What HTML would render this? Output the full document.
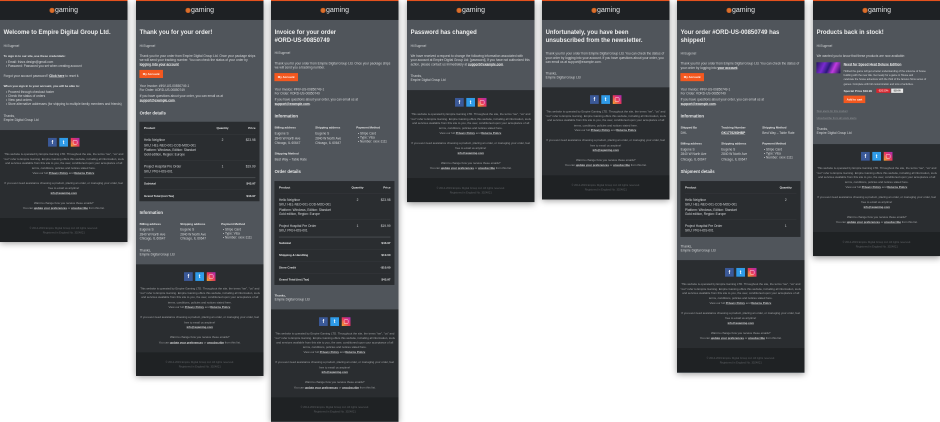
<!DOCTYPE html>
<html><head><meta charset="utf-8"><style>
html,body{margin:0;padding:0;background:#fff;width:940px;height:422px;overflow:hidden;font-family:"Liberation Sans",sans-serif}
.m{position:absolute;top:0;width:600px;height:calc(var(--h)*4.706px);left:calc(var(--l)*1px);transform:scale(.2125);transform-origin:0 0;background:#50555b;box-shadow:0 8px 30px rgba(0,0,0,.4);overflow:hidden;filter:blur(1px)}
.bar{position:absolute;left:0;top:0;width:600px;height:94px;background:#1e2124;border-top:5px solid #e4521e;box-sizing:border-box}
.logo{position:absolute;left:0;width:600px;top:24px;text-align:center;color:#e4e5e6;font-size:33px;line-height:44px}
.logo i{display:inline-block;width:24px;height:24px;border-radius:50%;background:#d9702c;vertical-align:-4px;margin-right:2px;box-shadow:inset 0 0 0 3px #c85a20}
.l{position:absolute;left:calc(var(--x,3.6)*4.706px);top:calc(var(--y)*4.706px);transform:translateY(-50%);white-space:nowrap;font-size:15px;color:#d3d5d7;line-height:1}
.h1{font-size:28px;font-weight:bold;color:#eceded}
.h2{font-size:20px;font-weight:bold;color:#e6e7e8}
.b{font-weight:bold;color:#e4e5e6;font-size:14px}
u{font-weight:bold;color:#eceded}
.r{transform:translate(-100%,-50%)}
.c{transform:translate(-50%,-50%)}
.btn{position:absolute;left:calc(var(--x,3.4)*4.706px);top:calc(var(--y)*4.706px);width:calc(var(--w,23.5)*4.706px);height:38px;background:#f4581f;color:#fff;font-size:14px;font-weight:bold;line-height:38px;text-align:center}
.t{position:absolute;left:16px;width:565px;top:calc(var(--y)*4.706px);height:calc(var(--s)*4.706px);background:#2a2d30}
.d{position:absolute;left:37px;width:525px;top:calc(var(--y)*4.706px);height:2px;background:#393c3f}
.d.k{height:3px;background:#5a5d60}
.f{position:absolute;left:0;width:600px;height:527px;top:calc(var(--f)*4.706px);background:#2a2d30;color:#a2a4a6;font-size:13.4px;line-height:1}
.f .ln{position:absolute;left:0;width:600px;text-align:center;top:calc(var(--y)*4.706px);transform:translateY(-50%);white-space:nowrap}
.f u{color:#d0d1d2}
.f .bot{position:absolute;left:0;top:414px;width:600px;height:113px;background:#1f2224}
.f .low{color:#5e6164;font-size:12.5px}
.s{position:absolute;top:37px;width:41px;height:41px;color:#fff;font-weight:bold;font-size:24px;line-height:41px;text-align:center}
.fb{left:226px;background:#3b5998}.tw{left:279px;background:#2f9be8}.ig{left:333px;background:linear-gradient(45deg,#f7b02b,#e8355d 50%,#a62bb8)}
.ig:after{content:"";position:absolute;left:10px;top:10px;width:17px;height:17px;border:2px solid #fff;border-radius:5px}
.img{position:absolute;left:16px;top:293px;width:113px;height:52px;background:linear-gradient(115deg,#23155e,#7a2bd0 30%,#2a1a7a 50%,#c23be0 70%,#1a1050)}
.bd{position:absolute;top:calc(var(--y)*4.706px);height:20px;line-height:20px;font-size:11px;text-align:center;transform:translateY(-50%)}
</style></head><body>

<!-- 1 -->
<div class="m" style="--l:0;--h:242">
<div class="bar"></div><div class="logo"><i></i>gaming</div>
<div class="l h1" style="--y:32">Welcome to Empire Digital Group Ltd.</div>
<div class="l" style="--y:46">Hi Eugene!</div>
<div class="l b" style="--y:56">To sign in to our site, use these credentials:</div>
<div class="l" style="--y:62;--x:6">• Email: frizzz.design@gmail.com</div>
<div class="l" style="--y:66;--x:6">• Password: Password you set when creating account</div>
<div class="l" style="--y:76">Forgot your account password? <u>Click here</u> to reset it.</div>
<div class="l b" style="--y:86">When you sign in to your account, you will be able to:</div>
<div class="l" style="--y:92;--x:6">• Proceed through checkout faster</div>
<div class="l" style="--y:96;--x:6">• Check the status of orders</div>
<div class="l" style="--y:100;--x:6">• View past orders</div>
<div class="l" style="--y:104;--x:6">• Store alternative addresses (for shipping to multiple family members and friends)</div>
<div class="l" style="--y:116">Thanks,</div>
<div class="l" style="--y:120">Empire Digital Group Ltd</div>
<div class="f" style="--f:130"><div class="s fb">f</div><div class="s tw">t</div><div class="s ig"></div>
<div class="ln" style="--y:24">This website is operated by Empire Gaming LTD. Throughout the site, the terms "we", "us" and</div>
<div class="ln" style="--y:29">"our" refer to Empire Gaming. Empire Gaming offers this website, including all information, tools</div>
<div class="ln" style="--y:33">and services available from this site to you, the user, conditioned upon your acceptance of all</div>
<div class="ln" style="--y:38">terms, conditions, policies and notices stated here.</div>
<div class="ln" style="--y:43">View our full <u>Privacy Policy</u> and <u>Returns Policy</u>.</div>
<div class="ln" style="--y:53">If you ever need assistance choosing a product, placing an order, or managing your order, feel</div>
<div class="ln" style="--y:58">free to email us anytime!</div>
<div class="ln" style="--y:63"><u>info@egaming.com</u></div>
<div class="ln" style="--y:73">Want to change how you receive these emails?</div>
<div class="ln" style="--y:78">You can <u>update your preferences</u> or <u>unsubscribe</u> from this list.</div>
<div class="bot"></div>
<div class="ln low" style="--y:98">© 2014-2019 Empire Digital Group Ltd. All rights reserved.</div>
<div class="ln low" style="--y:102.5">Registered in England No. 3024821</div>
</div></div>

<!-- 2 -->
<div class="m" style="--l:135.7;--h:376">
<div class="bar"></div><div class="logo"><i></i>gaming</div>
<div class="l h1" style="--y:32">Thank you for your order!</div>
<div class="l" style="--y:46">Hi Eugene!</div>
<div class="l" style="--y:56">Thank you for your order from Empire Digital Group Ltd. Once your package ships</div>
<div class="l" style="--y:60">we will send your tracking number. You can check the status of your order by</div>
<div class="l" style="--y:64.5"><u>logging into your account</u></div>
<div class="btn" style="--y:70">My Account</div>
<div class="l" style="--y:86">Your Invoice: #INV-US-00850749-1</div>
<div class="l" style="--y:90">For Order: #ORD-US-00850749</div>
<div class="l" style="--y:96">If you have questions about your order, you can email us at</div>
<div class="l" style="--y:100.5"><u>support@example.com</u>.</div>
<div class="l h2" style="--y:113">Order details</div>
<div class="t" style="--y:121.7;--s:79.5"></div>
<div class="l b" style="--y:127.7;--x:8">Product</div>
<div class="l b c" style="--y:127.7;--x:86.5">Quantity</div>
<div class="l b r" style="--y:127.7;--x:119.5">Price</div>
<div class="d" style="--y:134.3"></div>
<div class="l" style="--y:140;--x:8">Hello Neighbor</div>
<div class="l c" style="--y:140;--x:86.5">2</div>
<div class="l r" style="--y:140;--x:119.5">$23.98</div>
<div class="l" style="--y:145.3;--x:8">SKU: HEL-NEO-001-COD-MOD-001</div>
<div class="l" style="--y:150;--x:8">Platform: Windows, Edition: Standart</div>
<div class="l" style="--y:154.6;--x:8">Gold edition, Region: Europe</div>
<div class="d" style="--y:160.3"></div>
<div class="l" style="--y:166.5;--x:8">Project Hospital Pre Order</div>
<div class="l c" style="--y:166.5;--x:86.5">1</div>
<div class="l r" style="--y:166.5;--x:119.5">$19.99</div>
<div class="l" style="--y:171.5;--x:8">SKU: PRJ-HOS-001</div>
<div class="d k" style="--y:177.5"></div>
<div class="l b" style="--y:183.5;--x:8">Subtotal</div>
<div class="l b r" style="--y:183.5;--x:119.5">$43.97</div>
<div class="d" style="--y:189.5"></div>
<div class="l b" style="--y:195.7;--x:8">Grand Total (incl.Tax)</div>
<div class="l b r" style="--y:195.7;--x:119.5">$43.97</div>
<div class="l h2" style="--y:212.7">Information</div>
<div class="l b" style="--y:223.7">Billing address</div><div class="l b" style="--y:223.7;--x:44.3">Shipping address</div><div class="l b" style="--y:223.7;--x:85.3">Payment Method</div>
<div class="l" style="--y:229.7">Eugene S</div><div class="l" style="--y:229.7;--x:44.3">Eugene S</div><div class="l" style="--y:229.7;--x:87">• Stripe Card</div>
<div class="l" style="--y:234.3">2840 W North Ave</div><div class="l" style="--y:234.3;--x:44.3">2840 W North Ave</div><div class="l" style="--y:233.5;--x:87">• Type: Visa</div>
<div class="l" style="--y:238.7">Chicago, IL 60647</div><div class="l" style="--y:238.7;--x:44.3">Chicago, IL 60647</div><div class="l" style="--y:237.7;--x:87">• Number: xxxx-1111</div>
<div class="l" style="--y:250.5">Thanks,</div>
<div class="l" style="--y:254.5">Empire Digital Group Ltd</div>
<div class="f" style="--f:264.3"><div class="s fb">f</div><div class="s tw">t</div><div class="s ig"></div>
<div class="ln" style="--y:24">This website is operated by Empire Gaming LTD. Throughout the site, the terms "we", "us" and</div>
<div class="ln" style="--y:29">"our" refer to Empire Gaming. Empire Gaming offers this website, including all information, tools</div>
<div class="ln" style="--y:33">and services available from this site to you, the user, conditioned upon your acceptance of all</div>
<div class="ln" style="--y:38">terms, conditions, policies and notices stated here.</div>
<div class="ln" style="--y:43">View our full <u>Privacy Policy</u> and <u>Returns Policy</u>.</div>
<div class="ln" style="--y:53">If you ever need assistance choosing a product, placing an order, or managing your order, feel</div>
<div class="ln" style="--y:58">free to email us anytime!</div>
<div class="ln" style="--y:63"><u>info@egaming.com</u></div>
<div class="ln" style="--y:73">Want to change how you receive these emails?</div>
<div class="ln" style="--y:78">You can <u>update your preferences</u> or <u>unsubscribe</u> from this list.</div>
<div class="bot"></div>
<div class="ln low" style="--y:98">© 2014-2019 Empire Digital Group Ltd. All rights reserved.</div>
<div class="ln low" style="--y:102.5">Registered in England No. 3024821</div>
</div></div>

<!-- 3 -->
<div class="m" style="--l:271;--h:422">
<div class="bar"></div><div class="logo"><i></i>gaming</div>
<div class="l h1" style="--y:32">Invoice for your order</div>
<div class="l h1" style="--y:40">#ORD-US-00850749</div>
<div class="l" style="--y:53">Hi Eugene!</div>
<div class="l" style="--y:63.7">Thank you for your order from Empire Digital Group Ltd. Once your package ships</div>
<div class="l" style="--y:67.7">we will send you a tracking number.</div>
<div class="btn" style="--y:73">My Account</div>
<div class="l" style="--y:89.7">Your Invoice: #INV-US-00850749-1</div>
<div class="l" style="--y:93.7">For Order: #ORD-US-00850749</div>
<div class="l" style="--y:99.7">If you have questions about your order, you can email us at</div>
<div class="l" style="--y:104"><u>support@example.com</u>.</div>
<div class="l h2" style="--y:116.5">Information</div>
<div class="l b" style="--y:127.5">Billing address</div><div class="l b" style="--y:127.5;--x:44.3">Shipping address</div><div class="l b" style="--y:127.5;--x:85.3">Payment Method</div>
<div class="l" style="--y:133.5">Eugene S</div><div class="l" style="--y:133.5;--x:44.3">Eugene S</div><div class="l" style="--y:133.5;--x:87">• Stripe Card</div>
<div class="l" style="--y:138.5">2840 W North Ave</div><div class="l" style="--y:138.5;--x:44.3">2840 W North Ave</div><div class="l" style="--y:137.5;--x:87">• Type: Visa</div>
<div class="l" style="--y:143.3">Chicago, IL 60647</div><div class="l" style="--y:143.3;--x:44.3">Chicago, IL 60647</div><div class="l" style="--y:141.5;--x:87">• Number: xxxx-1111</div>
<div class="l b" style="--y:153.3">Shipping Method</div>
<div class="l" style="--y:159.3">Best Way – Table Rate</div>
<div class="l h2" style="--y:172">Order details</div>
<div class="t" style="--y:181;--s:104"></div>
<div class="l b" style="--y:187.3;--x:8">Product</div>
<div class="l b c" style="--y:187.3;--x:86.5">Quantity</div>
<div class="l b r" style="--y:187.3;--x:119.5">Price</div>
<div class="d" style="--y:193.5"></div>
<div class="l" style="--y:200;--x:8">Hello Neighbor</div>
<div class="l c" style="--y:200;--x:86.5">2</div>
<div class="l r" style="--y:200;--x:119.5">$23.98</div>
<div class="l" style="--y:204.7;--x:8">SKU: HEL-NEO-001-COD-MOD-001</div>
<div class="l" style="--y:210;--x:8">Platform: Windows, Edition: Standart</div>
<div class="l" style="--y:214;--x:8">Gold edition, Region: Europe</div>
<div class="d" style="--y:219.5"></div>
<div class="l" style="--y:226;--x:8">Project Hospital Pre Order</div>
<div class="l c" style="--y:226;--x:86.5">1</div>
<div class="l r" style="--y:226;--x:119.5">$19.99</div>
<div class="l" style="--y:230.7;--x:8">SKU: PRJ-HOS-001</div>
<div class="d k" style="--y:236.7"></div>
<div class="l b" style="--y:243;--x:8">Subtotal</div>
<div class="l b r" style="--y:243;--x:119.5">$43.97</div>
<div class="d" style="--y:249"></div>
<div class="l b" style="--y:255;--x:8">Shipping &amp; Handling</div>
<div class="l b r" style="--y:255;--x:119.5">$10.00</div>
<div class="d" style="--y:261"></div>
<div class="l b" style="--y:267.3;--x:8">Store Credit</div>
<div class="l b r" style="--y:267.3;--x:119.5">-$10.00</div>
<div class="d" style="--y:273.5"></div>
<div class="l b" style="--y:279.7;--x:8">Grand Total (incl.Tax)</div>
<div class="l b r" style="--y:279.7;--x:119.5">$43.97</div>
<div class="l b" style="--y:295.3">Thanks,</div>
<div class="l" style="--y:299.3">Empire Digital Group Ltd</div>
<div class="f" style="--f:309.3"><div class="s fb">f</div><div class="s tw">t</div><div class="s ig"></div>
<div class="ln" style="--y:24">This website is operated by Empire Gaming LTD. Throughout the site, the terms "we", "us" and</div>
<div class="ln" style="--y:29">"our" refer to Empire Gaming. Empire Gaming offers this website, including all information, tools</div>
<div class="ln" style="--y:33">and services available from this site to you, the user, conditioned upon your acceptance of all</div>
<div class="ln" style="--y:38">terms, conditions, policies and notices stated here.</div>
<div class="ln" style="--y:43">View our full <u>Privacy Policy</u> and <u>Returns Policy</u>.</div>
<div class="ln" style="--y:53">If you ever need assistance choosing a product, placing an order, or managing your order, feel</div>
<div class="ln" style="--y:58">free to email us anytime!</div>
<div class="ln" style="--y:63"><u>info@egaming.com</u></div>
<div class="ln" style="--y:73">Want to change how you receive these emails?</div>
<div class="ln" style="--y:78">You can <u>update your preferences</u> or <u>unsubscribe</u> from this list.</div>
<div class="bot"></div>
<div class="ln low" style="--y:98">© 2014-2019 Empire Digital Group Ltd. All rights reserved.</div>
<div class="ln low" style="--y:102.5">Registered in England No. 3024821</div>
</div></div>

<!-- 4 -->
<div class="m" style="--l:406.5;--h:202">
<div class="bar"></div><div class="logo"><i></i>gaming</div>
<div class="l h1" style="--y:32">Password has changed</div>
<div class="l" style="--y:46">Hi Eugene!</div>
<div class="l" style="--y:56">We have received a request to change the following information associated with</div>
<div class="l" style="--y:60">your account at Empire Digital Group Ltd: [password]. If you have not authorized this</div>
<div class="l" style="--y:64.5">action, please contact us immediately at <u>support@example.com</u>.</div>
<div class="l" style="--y:76">Thanks,</div>
<div class="l" style="--y:80">Empire Digital Group Ltd</div>
<div class="f" style="--f:90"><div class="s fb">f</div><div class="s tw">t</div><div class="s ig"></div>
<div class="ln" style="--y:24">This website is operated by Empire Gaming LTD. Throughout the site, the terms "we", "us" and</div>
<div class="ln" style="--y:29">"our" refer to Empire Gaming. Empire Gaming offers this website, including all information, tools</div>
<div class="ln" style="--y:33">and services available from this site to you, the user, conditioned upon your acceptance of all</div>
<div class="ln" style="--y:38">terms, conditions, policies and notices stated here.</div>
<div class="ln" style="--y:43">View our full <u>Privacy Policy</u> and <u>Returns Policy</u>.</div>
<div class="ln" style="--y:53">If you ever need assistance choosing a product, placing an order, or managing your order, feel</div>
<div class="ln" style="--y:58">free to email us anytime!</div>
<div class="ln" style="--y:63"><u>info@egaming.com</u></div>
<div class="ln" style="--y:73">Want to change how you receive these emails?</div>
<div class="ln" style="--y:78">You can <u>update your preferences</u> or <u>unsubscribe</u> from this list.</div>
<div class="bot"></div>
<div class="ln low" style="--y:98">© 2014-2019 Empire Digital Group Ltd. All rights reserved.</div>
<div class="ln low" style="--y:102.5">Registered in England No. 3024821</div>
</div></div>

<!-- 5 -->
<div class="m" style="--l:541.7;--h:199.5">
<div class="bar"></div><div class="logo"><i></i>gaming</div>
<div class="l h1" style="--y:32">Unfortunately, you have been</div>
<div class="l h1" style="--y:40">unsubscribed from the newsletter.</div>
<div class="l" style="--y:53.7">Thank you for your order from Empire Digital Group Ltd. You can check the status of</div>
<div class="l" style="--y:57.7">your order by logging into your account. If you have questions about your order, you</div>
<div class="l" style="--y:62">can email us at support@example.com.</div>
<div class="l" style="--y:73.7">Thanks,</div>
<div class="l" style="--y:77.7">Empire Digital Group Ltd</div>
<div class="f" style="--f:87.3"><div class="s fb">f</div><div class="s tw">t</div><div class="s ig"></div>
<div class="ln" style="--y:24">This website is operated by Empire Gaming LTD. Throughout the site, the terms "we", "us" and</div>
<div class="ln" style="--y:29">"our" refer to Empire Gaming. Empire Gaming offers this website, including all information, tools</div>
<div class="ln" style="--y:33">and services available from this site to you, the user, conditioned upon your acceptance of all</div>
<div class="ln" style="--y:38">terms, conditions, policies and notices stated here.</div>
<div class="ln" style="--y:43">View our full <u>Privacy Policy</u> and <u>Returns Policy</u>.</div>
<div class="ln" style="--y:53">If you ever need assistance choosing a product, placing an order, or managing your order, feel</div>
<div class="ln" style="--y:58">free to email us anytime!</div>
<div class="ln" style="--y:63"><u>info@egaming.com</u></div>
<div class="ln" style="--y:73">Want to change how you receive these emails?</div>
<div class="ln" style="--y:78">You can <u>update your preferences</u> or <u>unsubscribe</u> from this list.</div>
<div class="bot"></div>
<div class="ln low" style="--y:98">© 2014-2019 Empire Digital Group Ltd. All rights reserved.</div>
<div class="ln low" style="--y:102.5">Registered in England No. 3024821</div>
</div></div>

<!-- 6 -->
<div class="m" style="--l:677;--h:373">
<div class="bar"></div><div class="logo"><i></i>gaming</div>
<div class="l h1" style="--y:32">Your order #ORD-US-00850749 has</div>
<div class="l h1" style="--y:40">shipped!</div>
<div class="l" style="--y:53.7">Hi Eugene!</div>
<div class="l" style="--y:63.7">Thank you for your order from Empire Digital Group Ltd. You can check the status of</div>
<div class="l" style="--y:68">your order by logging into <u>your account</u>.</div>
<div class="btn" style="--y:73">My Account</div>
<div class="l" style="--y:89.7">Your Invoice: #INV-US-00850749-1</div>
<div class="l" style="--y:93.7">For Order: #ORD-US-00850749</div>
<div class="l" style="--y:99.7">If you have questions about your order, you can email us at</div>
<div class="l" style="--y:104"><u>support@example.com</u>.</div>
<div class="l h2" style="--y:116.5">Information</div>
<div class="l b" style="--y:127.5">Shipped By</div><div class="l b" style="--y:127.5;--x:44.3">Tracking Number</div><div class="l b" style="--y:127.5;--x:85.3">Shipping Method</div>
<div class="l" style="--y:133.3">DHL</div><div class="l" style="--y:133.3;--x:44.3"><u>GK1776260HBP</u></div><div class="l" style="--y:133.3;--x:85.3">Best Way – Table Rate</div>
<div class="l b" style="--y:143.7">Billing address</div><div class="l b" style="--y:143.7;--x:44.3">Shipping address</div><div class="l b" style="--y:143.7;--x:85.3">Payment Method</div>
<div class="l" style="--y:149.7">Eugene S</div><div class="l" style="--y:149.7;--x:44.3">Eugene S</div><div class="l" style="--y:149.7;--x:87">• Stripe Card</div>
<div class="l" style="--y:154.3">2840 W North Ave</div><div class="l" style="--y:154.3;--x:44.3">2840 W North Ave</div><div class="l" style="--y:153.7;--x:87">• Type: Visa</div>
<div class="l" style="--y:159.3">Chicago, IL 60647</div><div class="l" style="--y:159.3;--x:44.3">Chicago, IL 60647</div><div class="l" style="--y:157.7;--x:87">• Number: xxxx-1111</div>
<div class="l h2" style="--y:172">Shipment details</div>
<div class="t" style="--y:181;--s:56"></div>
<div class="l b" style="--y:187.3;--x:8">Product</div>
<div class="l b c" style="--y:187.3;--x:108.7">Quantity</div>
<div class="d" style="--y:193.5"></div>
<div class="l" style="--y:200;--x:8">Hello Neighbor</div>
<div class="l c" style="--y:200;--x:108.7">2</div>
<div class="l" style="--y:204.7;--x:8">SKU: HEL-NEO-001-COD-MOD-001</div>
<div class="l" style="--y:210;--x:8">Platform: Windows, Edition: Standart</div>
<div class="l" style="--y:214;--x:8">Gold edition, Region: Europe</div>
<div class="d" style="--y:219.5"></div>
<div class="l" style="--y:226;--x:8">Project Hospital Pre Order</div>
<div class="l c" style="--y:226;--x:108.7">1</div>
<div class="l" style="--y:230.7;--x:8">SKU: PRJ-HOS-001</div>
<div class="l" style="--y:246.7">Thanks,</div>
<div class="l" style="--y:250.7">Empire Digital Group Ltd</div>
<div class="f" style="--f:260"><div class="s fb">f</div><div class="s tw">t</div><div class="s ig"></div>
<div class="ln" style="--y:24">This website is operated by Empire Gaming LTD. Throughout the site, the terms "we", "us" and</div>
<div class="ln" style="--y:29">"our" refer to Empire Gaming. Empire Gaming offers this website, including all information, tools</div>
<div class="ln" style="--y:33">and services available from this site to you, the user, conditioned upon your acceptance of all</div>
<div class="ln" style="--y:38">terms, conditions, policies and notices stated here.</div>
<div class="ln" style="--y:43">View our full <u>Privacy Policy</u> and <u>Returns Policy</u>.</div>
<div class="ln" style="--y:53">If you ever need assistance choosing a product, placing an order, or managing your order, feel</div>
<div class="ln" style="--y:58">free to email us anytime!</div>
<div class="ln" style="--y:63"><u>info@egaming.com</u></div>
<div class="ln" style="--y:73">Want to change how you receive these emails?</div>
<div class="ln" style="--y:78">You can <u>update your preferences</u> or <u>unsubscribe</u> from this list.</div>
<div class="bot"></div>
<div class="ln low" style="--y:98">© 2014-2019 Empire Digital Group Ltd. All rights reserved.</div>
<div class="ln low" style="--y:102.5">Registered in England No. 3024821</div>
</div></div>

<!-- 7 -->
<div class="m" style="--l:812.7;--h:256">
<div class="bar"></div><div class="logo"><i></i>gaming</div>
<div class="l h1" style="--y:32">Products back in stock!</div>
<div class="l" style="--y:46">Hi Eugene!</div>
<div class="l" style="--y:56">We wanted you to know that these products are now available:</div>
<div class="img"></div>
<div class="l" style="--y:64.7;--x:30.6;font-size:16px"><u>Need for Speed Heat Deluxe Edition</u></div>
<div class="l" style="--y:71;--x:30.6;font-size:12px">Hotbed the game will get a better understanding of the universe of house</div>
<div class="l" style="--y:75;--x:30.6;font-size:12px">building with the new title. Get ready for a game in House and</div>
<div class="l" style="--y:79.3;--x:30.6;font-size:12px">celebrate the house adventure with the third of the famous Sims series of</div>
<div class="l" style="--y:84.3;--x:30.6;font-size:12px">games. Complete with full customization and tons of activities.</div>
<div class="l b" style="--y:90.7;--x:30.6;font-size:14px">Special Price $19.99</div>
<div class="bd" style="--y:90.7;left:298px;width:66px;background:#d8252e;color:#fff">-$20.50%</div>
<div class="bd" style="--y:90.7;left:368px;width:56px;background:#e8e8e8;color:#444;text-decoration:line-through">$29.99</div>
<div class="btn" style="--x:30.6;--y:95.7;--w:21.7;height:35px;line-height:35px">Add to cart</div>
<div class="l" style="--y:111.3;color:#8d9094;font-size:12.5px;text-decoration:underline">Stop alerts for this product</div>
<div class="l" style="--y:118;color:#8d9094;font-size:13px;text-decoration:underline">Unsubscribe from all stock alerts</div>
<div class="l" style="--y:129.3">Thanks,</div>
<div class="l" style="--y:133.3">Empire Digital Group Ltd</div>
<div class="f" style="--f:144"><div class="s fb">f</div><div class="s tw">t</div><div class="s ig"></div>
<div class="ln" style="--y:24">This website is operated by Empire Gaming LTD. Throughout the site, the terms "we", "us" and</div>
<div class="ln" style="--y:29">"our" refer to Empire Gaming. Empire Gaming offers this website, including all information, tools</div>
<div class="ln" style="--y:33">and services available from this site to you, the user, conditioned upon your acceptance of all</div>
<div class="ln" style="--y:38">terms, conditions, policies and notices stated here.</div>
<div class="ln" style="--y:43">View our full <u>Privacy Policy</u> and <u>Returns Policy</u>.</div>
<div class="ln" style="--y:53">If you ever need assistance choosing a product, placing an order, or managing your order, feel</div>
<div class="ln" style="--y:58">free to email us anytime!</div>
<div class="ln" style="--y:63"><u>info@egaming.com</u></div>
<div class="ln" style="--y:73">Want to change how you receive these emails?</div>
<div class="ln" style="--y:78">You can <u>update your preferences</u> or <u>unsubscribe</u> from this list.</div>
<div class="bot"></div>
<div class="ln low" style="--y:98">© 2014-2019 Empire Digital Group Ltd. All rights reserved.</div>
<div class="ln low" style="--y:102.5">Registered in England No. 3024821</div>
</div></div>

</body></html>
